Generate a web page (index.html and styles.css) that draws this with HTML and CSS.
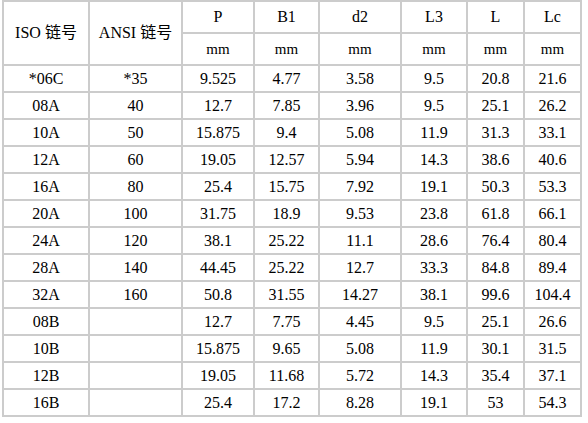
FILE: index.html
```html
<!DOCTYPE html>
<html>
<head>
<meta charset="utf-8">
<link rel="stylesheet" href="styles.css">
</head>
<body>
<table class="spec">
  <colgroup>
    <col class="c1"><col class="c2"><col class="c3"><col class="c4"><col class="c5"><col class="c6"><col class="c7"><col class="c8">
  </colgroup>
  <thead>
    <tr class="hrow">
      <th rowspan="2">ISO 链号</th>
      <th rowspan="2">ANSI 链号</th>
      <th>P</th><th>B1</th><th>d2</th><th>L3</th><th>L</th><th>Lc</th>
    </tr>
    <tr class="hrow unit">
      <th>mm</th><th>mm</th><th>mm</th><th>mm</th><th>mm</th><th>mm</th>
    </tr>
  </thead>
  <tbody>
    <tr><td>*06C</td><td>*35</td><td>9.525</td><td>4.77</td><td>3.58</td><td>9.5</td><td>20.8</td><td>21.6</td></tr>
    <tr><td>08A</td><td>40</td><td>12.7</td><td>7.85</td><td>3.96</td><td>9.5</td><td>25.1</td><td>26.2</td></tr>
    <tr><td>10A</td><td>50</td><td>15.875</td><td>9.4</td><td>5.08</td><td>11.9</td><td>31.3</td><td>33.1</td></tr>
    <tr><td>12A</td><td>60</td><td>19.05</td><td>12.57</td><td>5.94</td><td>14.3</td><td>38.6</td><td>40.6</td></tr>
    <tr><td>16A</td><td>80</td><td>25.4</td><td>15.75</td><td>7.92</td><td>19.1</td><td>50.3</td><td>53.3</td></tr>
    <tr><td>20A</td><td>100</td><td>31.75</td><td>18.9</td><td>9.53</td><td>23.8</td><td>61.8</td><td>66.1</td></tr>
    <tr><td>24A</td><td>120</td><td>38.1</td><td>25.22</td><td>11.1</td><td>28.6</td><td>76.4</td><td>80.4</td></tr>
    <tr><td>28A</td><td>140</td><td>44.45</td><td>25.22</td><td>12.7</td><td>33.3</td><td>84.8</td><td>89.4</td></tr>
    <tr><td>32A</td><td>160</td><td>50.8</td><td>31.55</td><td>14.27</td><td>38.1</td><td>99.6</td><td>104.4</td></tr>
    <tr><td>08B</td><td></td><td>12.7</td><td>7.75</td><td>4.45</td><td>9.5</td><td>25.1</td><td>26.6</td></tr>
    <tr><td>10B</td><td></td><td>15.875</td><td>9.65</td><td>5.08</td><td>11.9</td><td>30.1</td><td>31.5</td></tr>
    <tr><td>12B</td><td></td><td>19.05</td><td>11.68</td><td>5.72</td><td>14.3</td><td>35.4</td><td>37.1</td></tr>
    <tr><td>16B</td><td></td><td>25.4</td><td>17.2</td><td>8.28</td><td>19.1</td><td>53</td><td>54.3</td></tr>
  </tbody>
</table>
</body>
</html>
```

FILE: styles.css
```css
html, body {
  margin: 0;
  padding: 0;
  background: #ffffff;
}

body {
  padding: 0 0 0 2px;
  font-family: "Liberation Serif", "Noto Sans CJK SC", serif;
  font-size: 16px;
  color: #000;
}

.spec {
  table-layout: fixed;
  border-collapse: separate;
  border-spacing: 0;
  width: 580px;
  border-left: 2px solid #cccccc;
  border-top: 2px solid #cccccc;
}

.c1 { width: 86px; }
.c2 { width: 93px; }
.c3 { width: 72px; }
.c4 { width: 65px; }
.c5 { width: 82px; }
.c6 { width: 66px; }
.c7 { width: 57px; }
.c8 { width: 57px; }

.spec th,
.spec td {
  border-right: 2px solid #cccccc;
  border-bottom: 2px solid #cccccc;
  padding: 0;
  text-align: center;
  vertical-align: middle;
  font-weight: normal;
  white-space: nowrap;
  line-height: 18px;
}

.hrow th {
  height: 30px;
}

.unit th {
  font-size: 15px;
}

.spec td {
  height: 25px;
}
```
